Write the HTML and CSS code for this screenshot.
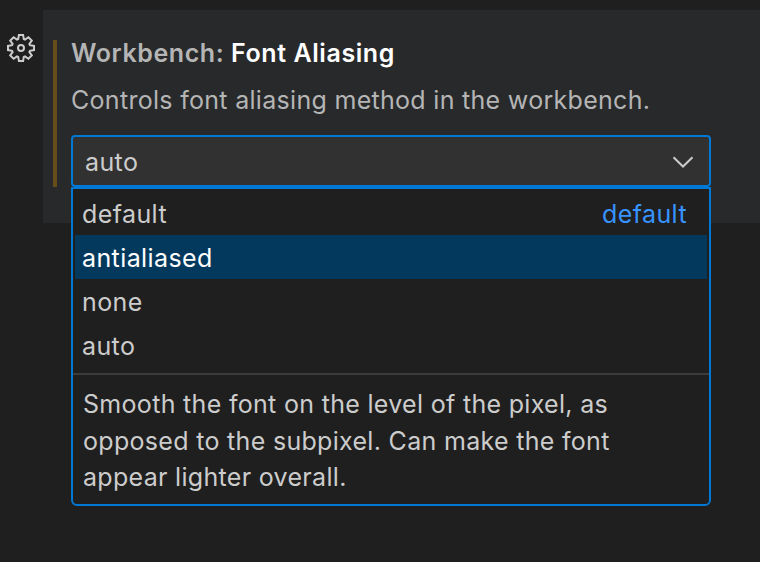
FILE: index.html
```
<!DOCTYPE html>
<html lang="en">
<head>
  <meta charset="UTF-8">
  <title>Settings</title>
  <link rel="stylesheet" href="styles.css">
</head>
<body>

<div class="setting-row">
  <div class="gutter">
    <svg class="gear" viewBox="0 0 30 30" width="30" height="30">
      <path d="M12.900 2h4.200l.7 4.100 1.200.5 3.400-2.400 3.400 3.400-2.400 3.400.5 1.200 4.100.7v4.200l-4.100.7-.5 1.200 2.400 3.400-3.400 3.400-3.400-2.400-1.200.5-.7 4.100h-4.200l-.7-4.100-1.200-.5-3.400 2.400-3.400-3.400 2.400-3.400-.5-1.200L2 17.100v-4.200l4.100-.7.5-1.200-2.400-3.400 3.400-3.400 3.400 2.400 1.200-.5z"/>
      <circle cx="15" cy="15" r="3"/>
    </svg>
  </div>

  <div class="setting">
    <div class="modified-bar"></div>
    <div class="content">
      <h2 class="title"><span class="category">Workbench:</span> <span class="label">Font Aliasing</span></h2>
      <p class="description">Controls font aliasing method in the workbench.</p>

      <div class="select">
        <span>auto</span>
        <svg class="chevron" viewBox="0 0 22 12" width="22" height="12">
          <path d="M1.500 1.200L11 10.500l9.500-9.300"/>
        </svg>

        <div class="menu">
          <ul class="options">
            <li><span>default</span><span class="detail">default</span></li>
            <li class="focused">antialiased</li>
            <li>none</li>
            <li>auto</li>
          </ul>
          <p class="option-help">
            Smooth the font on the level of the pixel, as<br>
            opposed to the subpixel. Can make the font<br>
            appear lighter overall.
          </p>
        </div>
      </div>
    </div>
  </div>
</div>

</body>
</html>
```
FILE: styles.css
```
* {
  box-sizing: border-box;
}

body {
  margin: 0;
  height: 562px;
  overflow: hidden;
  background: #1f1f1f;
  color: #cccccc;
  font-family: Inter, "Liberation Sans", sans-serif;
  font-size: 25px;
  letter-spacing: 0.3px;
}

.setting-row {
  display: flex;
  padding-top: 10px;
}

.gutter {
  width: 43px;
  padding: 23px 0 0 6px;
}

.gear {
  display: block;
  fill: none;
  stroke: #cccccc;
  stroke-width: 2;
}

.setting {
  display: flex;
  flex: 1;
  height: 213px;
  padding: 30px 49px 0 10px;
  background: #27292b;
}

.modified-bar {
  width: 4px;
  height: 147px;
  margin-right: 14px;
  background: #664d1a;
}

.content {
  flex: 1;
}

.title {
  height: 26px;
  margin: 0;
  font-size: 25px;
  font-weight: 600;
  line-height: 26px;
  letter-spacing: 0.57px;
  white-space: nowrap;
}

.category {
  color: #b5b5b5;
}

.label {
  color: #ffffff;
}

.description {
  height: 36px;
  margin: 16px 0 17px;
  color: #b5b5b5;
  line-height: 36px;
  white-space: nowrap;
}

.select {
  position: relative;
  display: flex;
  align-items: center;
  justify-content: space-between;
  height: 52px;
  padding: 2px 15px 0 12px;
  background: #313131;
  border: 2px solid #0078d4;
  border-radius: 4px;
  letter-spacing: 0.4px;
}

.chevron {
  fill: none;
  stroke: #cccccc;
  stroke-width: 2;
}

/* Dropdown hangs below the select box */
.menu {
  position: absolute;
  top: 50px;
  left: -2px;
  width: 640px;
  height: 319px;
  background: #1f1f1f;
  border: 2px solid #0078d4;
  border-radius: 0 0 6px 6px;
}

.options {
  margin: 0;
  padding: 2px 2px 6px;
  list-style: none;
}

.options li {
  display: flex;
  justify-content: space-between;
  height: 44px;
  padding: 0 20px 0 7px;
  line-height: 46px;
}

.options .focused {
  background: #04395e;
  color: #ffffff;
}

.detail {
  color: #3794ff;
}

.option-help {
  margin: 0;
  padding: 11px 10px 0;
  border-top: 2px solid #3c3c3c;
  line-height: 36.5px;
  letter-spacing: 0.31px;
}
```
